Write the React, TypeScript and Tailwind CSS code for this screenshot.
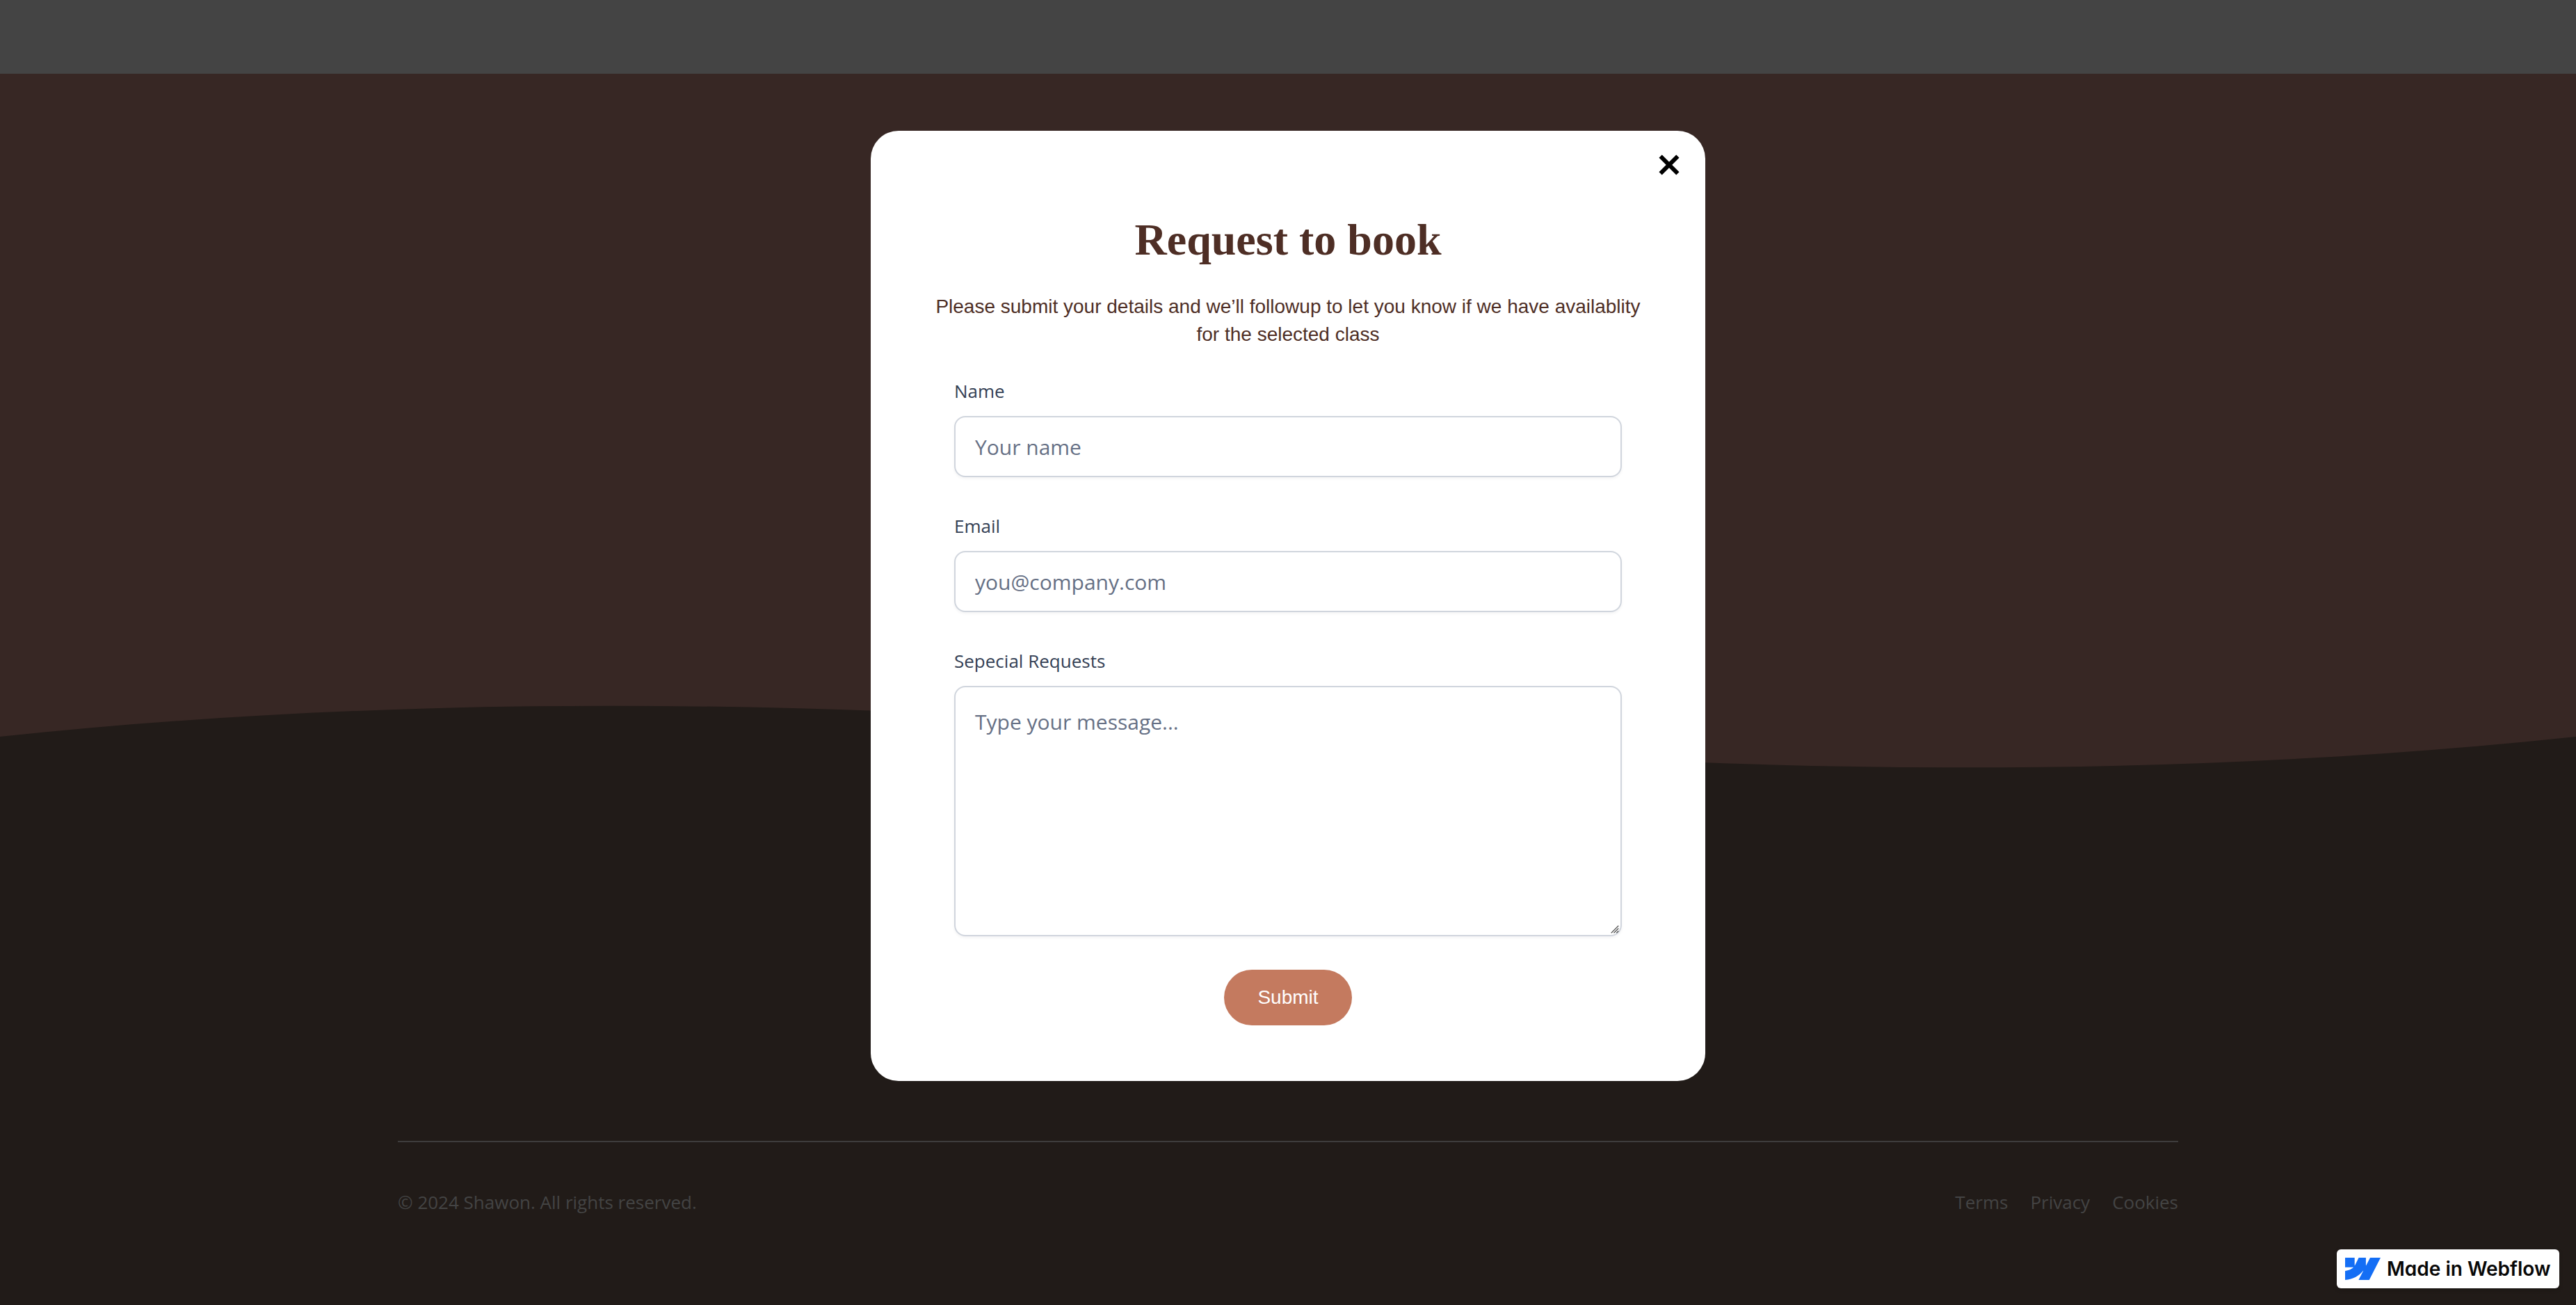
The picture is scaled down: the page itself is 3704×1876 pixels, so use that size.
import type { ReactNode } from "react";

const sans = "font-['Liberation_Sans',Arial,sans-serif]";
const humanist = "font-['Open_Sans','Noto_Sans',sans-serif]";
const fieldClass =
  "block w-full rounded-2xl border-2 border-[#d0d5dd] bg-white px-7 text-[30px] text-[#101828] placeholder:text-[#667085] placeholder:opacity-100 shadow-[0_2px_4px_rgba(16,24,40,0.05)] outline-none focus:border-[#c47a5f]";

function Field({ id, label, children }: { id: string; label: string; children: ReactNode }) {
  return (
    <div className="flex flex-col gap-4">
      <label htmlFor={id} className="text-[26px] leading-10 text-[#344054]">
        {label}
      </label>
      {children}
    </div>
  );
}

function Wave() {
  return (
    <svg viewBox="0 0 3704 92" preserveAspectRatio="none" className="block h-[92px] w-full" aria-hidden="true">
      <path d="M0 46C617 -19 1235 -7 1852 46S3087 111 3704 46V92H0Z" fill="#211b18" />
    </svg>
  );
}

function BookingDialog() {
  return (
    <div className="absolute inset-0 flex items-start justify-center px-8 pt-[188px]">
      <section
        role="dialog"
        aria-modal="true"
        aria-labelledby="booking-title"
        className={"relative w-full max-w-[1200px] rounded-[40px] bg-white px-[60px] pt-[117px] pb-20 " + sans}
      >
        <button type="button" aria-label="Close" className="absolute top-[25px] right-7 flex size-12 items-center justify-center text-black">
          <svg viewBox="0 0 30 30" className="size-[30px]" stroke="currentColor" strokeWidth="6" aria-hidden="true">
            <path d="M2.6 2.6L27.4 27.4M27.4 2.6L2.6 27.4" />
          </svg>
        </button>
        <h1
          id="booking-title"
          className="text-center font-['Liberation_Serif','Times_New_Roman',serif] text-[64px] leading-20 font-bold text-[#4e2e25]"
        >
          Request to book
        </h1>
        <p className="mt-9 px-5 text-center text-[28px] leading-10 text-[#4e2e25]">
          Please submit your details and we’ll followup to let you know if we have availablity for the selected class
        </p>
        <form className={"mt-[41px] flex flex-col gap-[50px] px-[60px] " + humanist} onSubmit={(e) => e.preventDefault()}>
          <Field id="name" label="Name">
            <input id="name" type="text" placeholder="Your name" className={fieldClass + " h-[88px]"} />
          </Field>
          <Field id="email" label="Email">
            <input id="email" type="email" placeholder="you@company.com" className={fieldClass + " h-[88px]"} />
          </Field>
          <Field id="requests" label="Sepecial Requests">
            <div className="relative">
              <textarea
                id="requests"
                placeholder="Type your message..."
                className={fieldClass + " h-[360px] resize-none py-[26px] leading-12"}
              />
              <svg viewBox="0 0 16 16" className="absolute right-1 bottom-1 size-3" stroke="#4a4a4a" strokeWidth="1.5" aria-hidden="true">
                <path d="M1 15L15 1M6 15L15 6M11 15L15 11" />
              </svg>
            </div>
          </Field>
          <button
            type="submit"
            className={"-mt-0.5 h-20 self-center rounded-full bg-[#c47a5f] px-12 text-[28px] leading-10 text-white " + sans}
          >
            Submit
          </button>
        </form>
      </section>
    </div>
  );
}

function WebflowBadge() {
  return (
    <a
      href="#webflow"
      className="absolute right-6 bottom-6 flex h-14 w-80 items-center gap-[9px] rounded-md bg-white pl-3 shadow-[0_2px_6px_rgba(0,0,0,0.2)]"
    >
      <svg viewBox="0 0 51 32" className="h-8 w-[51px] shrink-0" fill="#146ef5" aria-hidden="true">
        <path d="M51 0L34.7 32H19.4L26.2 18.7H25.9C20.3 26 11.9 30.8 0 32V18.9C0 18.9 7.6 18.4 12.1 13.7H0V0H13.7V11.3H14L19.6 0H29.9V11.2H30.2L36 0Z" />
      </svg>
      <span className="font-[Inter,sans-serif] text-[28px] leading-8 font-semibold whitespace-nowrap text-[#080808] [font-feature-settings:'cv11']">
        Made in Webflow
      </span>
    </a>
  );
}

export default function App() {
  return (
    <div className="relative flex min-h-screen flex-col bg-[#211b18]">
      <header className="h-[106px] bg-[#444444]" />
      <main className="bg-[#372724] pt-[907px]">
        <Wave />
      </main>
      <footer className={"flex flex-1 flex-col justify-end px-8 pb-32 text-[26px] leading-10 text-[#444444] " + humanist}>
        <div className="mx-auto flex w-full max-w-[2560px] items-center justify-between border-t-2 border-[#3e3c3c] pt-[66px]">
          <p>© 2024 Shawon. All rights reserved.</p>
          <nav className="flex gap-8">
            <a href="#terms">Terms</a>
            <a href="#privacy">Privacy</a>
            <a href="#cookies">Cookies</a>
          </nav>
        </div>
      </footer>
      <BookingDialog />
      <WebflowBadge />
    </div>
  );
}
